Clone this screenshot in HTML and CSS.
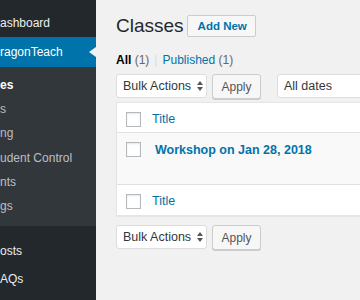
FILE: index.html
```html
<!DOCTYPE html>
<html>
<head>
    <meta charset="utf-8">
    <title>Classes ‹ DragonTeach</title>
    <link rel="stylesheet" href="styles.css">
</head>
<body>
    <div id="adminmenu">
        <ul class="menu">
            <li class="menu-top first">ashboard</li>
            <li class="menu-top current">ragonTeach<span class="menu-arrow"></span></li>
            <li class="submenu">
                <ul>
                    <li class="current">es</li>
                    <li>s</li>
                    <li>ng</li>
                    <li>udent Control</li>
                    <li>nts</li>
                    <li>gs</li>
                </ul>
            </li>
            <li class="menu-top second">osts</li>
            <li class="menu-top">AQs</li>
        </ul>
    </div>

    <div class="wrap">
        <div class="heading">
            <h1>Classes</h1>
            <a class="page-title-action">Add New</a>
        </div>

        <ul class="subsubsub">
            <li><b>All</b> <span class="count">(1)</span></li>
            <li class="sep">|</li>
            <li><a>Published</a> <span class="count">(1)</span></li>
        </ul>

        <div class="tablenav">
            <div class="select bulk">Bulk Actions
                <svg class="updown" width="6" height="10" viewBox="0 0 6 10"><path d="M3 0L6 4H0Z M3 10L0 6H6Z" fill="#555"/></svg>
            </div>
            <button class="button">Apply</button>
            <div class="select dates">All dates</div>
        </div>

        <div class="list-table">
            <div class="row head">
                <div class="check"><span class="checkbox"></span></div>
                <div class="title"><a>Title</a></div>
            </div>
            <div class="row item">
                <div class="check"><span class="checkbox"></span></div>
                <div class="title"><a class="row-title">Workshop on Jan 28, 2018</a></div>
            </div>
            <div class="row foot">
                <div class="check"><span class="checkbox"></span></div>
                <div class="title"><a>Title</a></div>
            </div>
        </div>

        <div class="tablenav bottom">
            <div class="select bulk">Bulk Actions
                <svg class="updown" width="6" height="10" viewBox="0 0 6 10"><path d="M3 0L6 4H0Z M3 10L0 6H6Z" fill="#555"/></svg>
            </div>
            <button class="button">Apply</button>
        </div>
    </div>
</body>
</html>
```

FILE: styles.css
```css
body {
    margin: 0;
    height: 300px;
    overflow: hidden;
    display: flex;
    background: #f1f1f1;
    font-family: "Liberation Sans", Arial, sans-serif;
    color: #444;
}
ul { list-style: none; margin: 0; padding: 0; }
a { color: #0073aa; }

/* admin menu */
#adminmenu {
    width: 96px;
    flex: none;
    background: #23282d;
    overflow: hidden;
    white-space: nowrap;
}
.menu-top {
    position: relative;
    color: #eee;
    font-size: 12px;
    line-height: 28px;
}
.menu-top.first {
    padding: 9px 0 0;
}
.menu-top.current {
    background: #0073aa;
    color: #fff;
    line-height: 30px;
}
.menu-top.second {
    padding-top: 11px;
}
.menu-arrow {
    position: absolute;
    right: 0;
    top: 10px;
    border: 5px solid transparent;
    border-right: 7px solid #f1f1f1;
    border-left: 0;
}
.submenu {
    background: #32373c;
    padding: 6px 0 8px;
}
.submenu li {
    color: rgba(240,245,250,.72);
    font-size: 12px;
    line-height: 24.2px;
}
.submenu li.current {
    color: #fff;
    font-weight: bold;
}

/* content */
.wrap {
    flex: 1;
    padding-left: 20px;
    min-width: 0;
    overflow: hidden;
}
.heading {
    display: flex;
    align-items: center;
    gap: 3px;
    padding-top: 14px;
}
h1 {
    margin: 0;
    font-size: 19px;
    font-weight: normal;
    color: #23282d;
    line-height: 24px;
}
.page-title-action {
    border: 1px solid #ccc;
    border-radius: 2px;
    background: #f7f7f7;
    font-size: 11.5px;
    font-weight: bold;
    line-height: 20px;
    padding: 0 8px 0 10px;
}
.subsubsub {
    display: flex;
    gap: 5px;
    font-size: 12px;
    margin-top: 14px;
    line-height: 16px;
    color: #666;
}
.subsubsub b { color: #000; }
.subsubsub .sep { color: #ddd; }

.tablenav {
    display: flex;
    gap: 5px;
    margin-top: 6px;
    height: 25px;
}
.tablenav > * { flex: none; }
.tablenav.bottom {
    margin-top: 9px;
}
.select {
    box-sizing: border-box;
    height: 24px;
    border: 1px solid #ddd;
    border-radius: 3px;
    background: #fff;
    font-size: 12.5px;
    line-height: 22px;
    color: #32373c;
    padding-left: 6px;
    display: flex;
    align-items: center;
    white-space: nowrap;
}
.select.bulk { width: 91px; }
.select .updown { margin-left: 6px; }
.select.dates {
    margin-left: 11px;
    width: 120px;
}
.button {
    box-sizing: border-box;
    width: 49px;
    height: 25px;
    border: 1px solid #ccc;
    border-radius: 3px;
    background: #f7f7f7;
    box-shadow: 0 1px 0 #ccc;
    font-family: inherit;
    font-size: 12px;
    color: #555;
    padding: 0;
}

.list-table {
    margin-top: 3px;
    width: 300px;
    background: #fff;
    border: 1px solid #e5e5e5;
    box-shadow: 0 1px 1px rgba(0,0,0,.04);
}
.row {
    display: flex;
    box-sizing: border-box;
    font-size: 12.5px;
    line-height: 16px;
}
.row.head { height: 30px; border-bottom: 1px solid #e1e1e1; }
.row.item { height: 51px; background: #f9f9f9; }
.row.foot { height: 31px; border-top: 1px solid #e1e1e1; }
.check {
    width: 26px;
    padding: 9px 0 0 9px;
}
.checkbox {
    display: block;
    box-sizing: border-box;
    width: 15px;
    height: 15px;
    border: 1px solid #b4b9be;
    background: #fff;
    box-shadow: inset 0 1px 2px rgba(0,0,0,.1);
}
.title { padding-top: 8px; }
.row-title {
    display: block;
    font-weight: bold;
    padding: 1px 0 0 3px;
    font-size: 12.5px;
}
```
